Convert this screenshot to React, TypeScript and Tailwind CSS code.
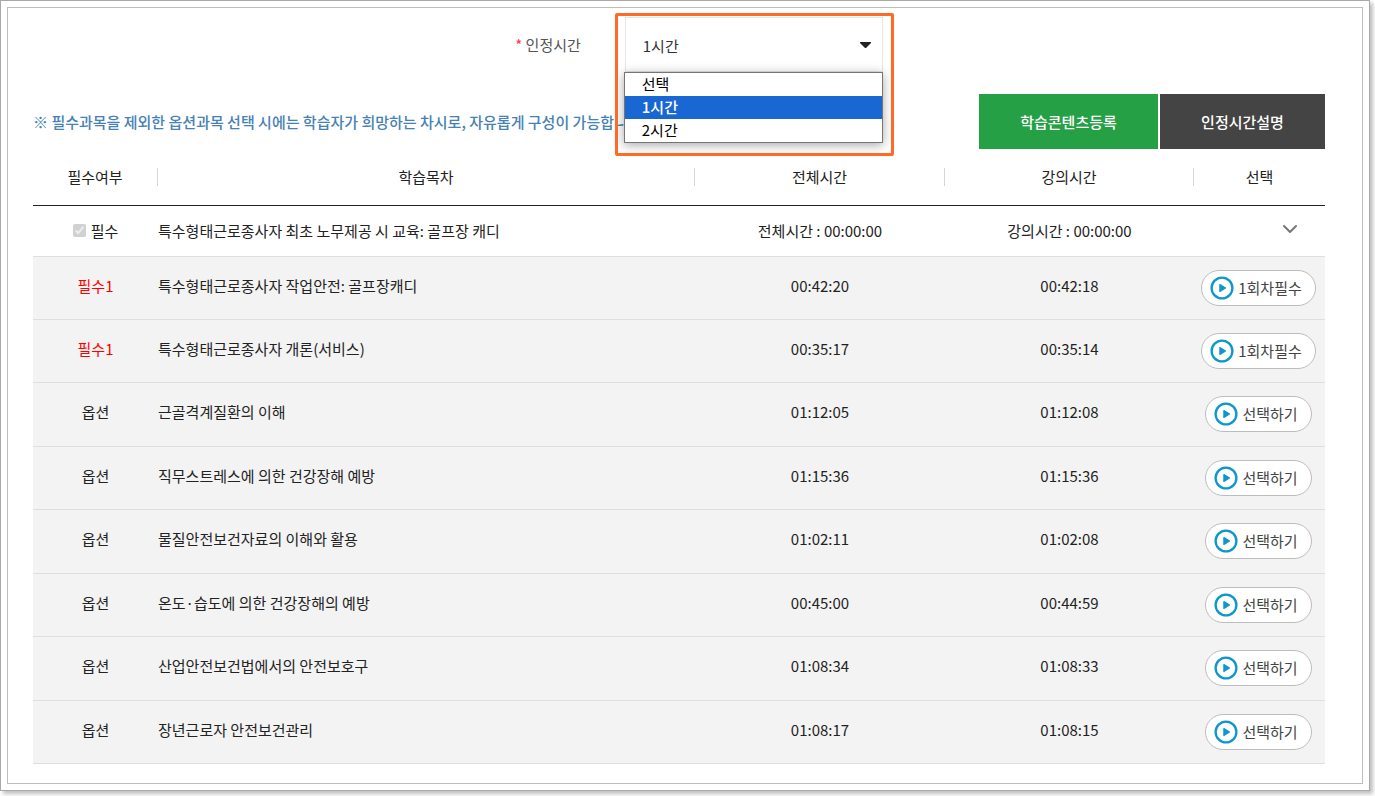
import React from 'react';
import { ChevronDown } from 'lucide-react';

type Lesson = {
  title: string;
  total: string;
  lecture: string;
  required?: boolean;
};

const LESSONS: Lesson[] = [
  { title: '특수형태근로종사자 작업안전: 골프장캐디', total: '00:42:20', lecture: '00:42:18', required: true },
  { title: '특수형태근로종사자 개론(서비스)', total: '00:35:17', lecture: '00:35:14', required: true },
  { title: '근골격계질환의 이해', total: '01:12:05', lecture: '01:12:08' },
  { title: '직무스트레스에 의한 건강장해 예방', total: '01:15:36', lecture: '01:15:36' },
  { title: '물질안전보건자료의 이해와 활용', total: '01:02:11', lecture: '01:02:08' },
  { title: '온도·습도에 의한 건강장해의 예방', total: '00:45:00', lecture: '00:44:59' },
  { title: '산업안전보건법에서의 안전보호구', total: '01:08:34', lecture: '01:08:33' },
  { title: '장년근로자 안전보건관리', total: '01:08:17', lecture: '01:08:15' },
];

const HOURS = ['선택', '1시간', '2시간'];

const PlayIcon: React.FC = () => (
  <svg className="h-6 w-6 shrink-0" viewBox="0 0 24 24" aria-hidden="true">
    <circle cx="12" cy="12" r="10.4" fill="none" stroke="#0c97cd" strokeWidth="2.3" />
    <path d="M9.9 8.6v6.8l5.6-3.4z" fill="#0c97cd" stroke="#0c97cd" strokeWidth="1.2" strokeLinejoin="round" />
  </svg>
);

const HourSelect: React.FC = () => (
  <div className="relative w-[258px]">
    <select
      id="hours"
      defaultValue="1시간"
      className="h-[55px] w-full appearance-none border border-[#e6e6e6] bg-white px-[17px] pt-0.5 text-[#333]"
    >
      {HOURS.map((hour) => (
        <option key={hour}>{hour}</option>
      ))}
    </select>
    <svg className="pointer-events-none absolute top-[25px] right-3 h-[6px] w-[11px]" viewBox="0 0 11 6" aria-hidden="true">
      <path d="M0 0h11v1L6 6H5L0 1z" fill="#222" />
    </svg>

    {/* opened list */}
    <ul
      role="listbox"
      aria-label="인정시간"
      className="absolute top-[55px] -left-px z-10 w-[259px] border border-[#767676] bg-white text-black shadow-[0_2px_10px_rgba(0,0,0,0.35)]"
    >
      {HOURS.map((hour) => (
        <li
          key={hour}
          role="option"
          aria-selected={hour === '1시간'}
          className="h-[23px] px-[17px] leading-[21px] aria-selected:bg-[#1967d2] aria-selected:font-medium aria-selected:text-white"
        >
          {hour}
        </li>
      ))}
    </ul>

    {/* highlight frame */}
    <div className="pointer-events-none absolute -top-1 -left-[10px] z-20 h-[143px] w-[279px] rounded-[2px] border-3 border-[#ff6a26]" />
  </div>
);

const LessonRow: React.FC<{ lesson: Lesson }> = ({ lesson }) => (
  <tr className="h-[63px] border-b border-[#dedede] bg-[#f3f3f3] not-first:odd:h-16">
    <td className={lesson.required ? 'pb-1 text-center text-[#ff0000]' : 'pb-1 text-center'}>
      {lesson.required ? '필수1' : '옵션'}
    </td>
    <td className="pb-1">{lesson.title}</td>
    <td className="pb-1 text-center">{lesson.total}</td>
    <td className="pb-1 text-center">{lesson.lecture}</td>
    <td className="pr-0.5 text-center">
      <button
        type="button"
        className="inline-flex h-9 items-center gap-1 rounded-full border border-[#bdbdbd] bg-white pr-[13px] pl-2 align-middle text-[#444]"
      >
        <PlayIcon />
        {lesson.required ? '1회차필수' : '선택하기'}
      </button>
    </td>
  </tr>
);

const App: React.FC = () => {
  return (
    <div className="bg-white pr-[5px] pb-[5px] font-['Noto_Sans_CJK_KR',sans-serif] text-[15px] leading-[22px] text-[#222]">
      <div className="border border-[#a9a9a9] p-[6px] shadow-[3px_3px_4px_rgba(0,0,0,0.25)]">
        <main className="border border-[#bdbdbd] pt-[9px] pr-[37px] pb-[19px] pl-[25px]">
          <div className="flex items-center justify-center gap-11 pl-10">
            <label htmlFor="hours" className="text-[#555]">
              <span className="text-[#f04040]">*</span> 인정시간
            </label>
            <HourSelect />
          </div>

          <div className="mt-[22px] flex items-center justify-between">
            <p className="font-medium text-[#4682b4]">
              ※ 필수과목을 제외한 옵션과목 선택 시에는 학습자가 희망하는 차시로, 자유롭게 구성이 가능합니다.
            </p>
            <div className="flex gap-[2px] font-medium text-white">
              <button type="button" className="h-[55px] w-[179px] bg-[#25a044]">학습콘텐츠등록</button>
              <button type="button" className="h-[55px] w-[165px] bg-[#444]">인정시간설명</button>
            </div>
          </div>

          <table className="w-full table-fixed border-collapse">
            <colgroup>
              <col className="w-[125px]" />
              <col />
              <col className="w-[250px]" />
              <col className="w-[249px]" />
              <col className="w-[131px]" />
            </colgroup>
            <thead>
              <tr className="h-14 border-b border-[#222]">
                {['필수여부', '학습목차', '전체시간', '강의시간', '선택'].map((name) => (
                  <th key={name} scope="col" className="group p-0 font-normal">
                    <span className="block h-[18px] border-r border-[#d5d5d5] leading-[18px] group-last:border-r-0">
                      {name}
                    </span>
                  </th>
                ))}
              </tr>
            </thead>
            <tbody>
              <tr className="h-[51px] border-b border-[#dedede]">
                <td>
                  <label className="flex items-center justify-center gap-[5px]">
                    <input type="checkbox" checked disabled readOnly className="h-[13px] w-[13px]" />
                    필수
                  </label>
                </td>
                <td>특수형태근로종사자 최초 노무제공 시 교육: 골프장 캐디</td>
                <td className="text-center">전체시간 : 00:00:00</td>
                <td className="text-center">강의시간 : 00:00:00</td>
                <td className="pr-[23px] pb-1 text-right">
                  <button type="button" aria-label="접기" className="align-middle text-[#777]">
                    <ChevronDown className="h-6 w-6" strokeWidth={2} />
                  </button>
                </td>
              </tr>
            </tbody>
            <tbody>
              {LESSONS.map((lesson) => (
                <LessonRow key={lesson.title} lesson={lesson} />
              ))}
            </tbody>
          </table>
        </main>
      </div>
    </div>
  );
};

export default App;
